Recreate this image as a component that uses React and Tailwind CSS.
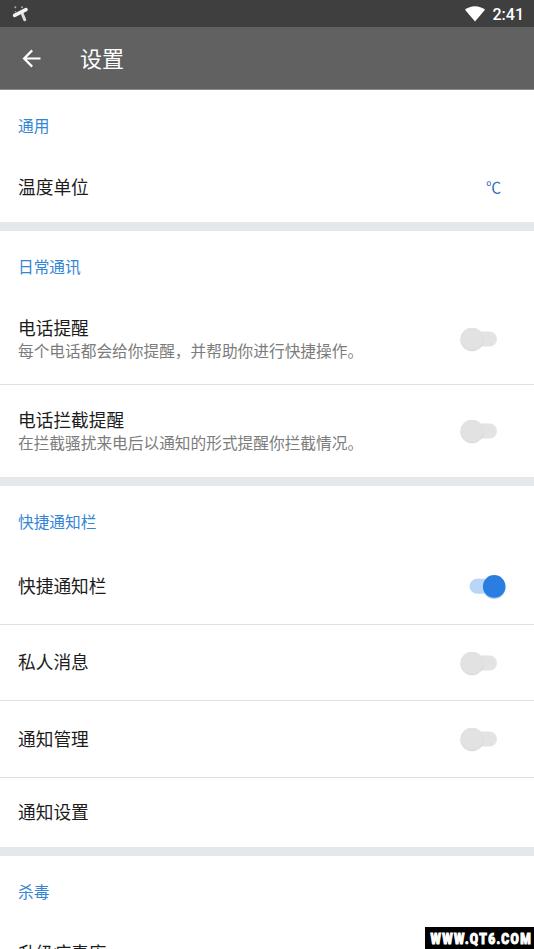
import React from "react";

function Switch({ on }) {
  return (
    <svg width="50" height="32" viewBox="0 0 50 32" className="shrink-0" role="switch" aria-checked={on}>
      {on ? (
        <>
          <rect x="13.5" y="7.8" width="28" height="15" rx="7.5" fill="#b9d6f6" />
          <circle cx="38.2" cy="16.8" r="11.3" fill="#bccfe6" />
          <circle cx="38.2" cy="15.4" r="11.3" fill="#2a7de1" />
        </>
      ) : (
        <>
          <rect x="13" y="8.5" width="28" height="15" rx="7.5" fill="#e3e3e3" />
          <circle cx="16" cy="16.6" r="11.6" fill="#d4d4d4" />
          <circle cx="16" cy="16" r="11.3" fill="#e2e2e2" />
        </>
      )}
    </svg>
  );
}

function Row({ title, sub, height, control }) {
  return (
    <div className={`flex shrink-0 items-center justify-between pr-[28px] pl-[18px] ${height}`}>
      <div className={sub ? "" : "pb-[3px]"}>
        <div className="text-[17.7px] leading-[24px] text-[#1c1c1c]">{title}</div>
        {sub && <div className="text-[15.7px] leading-[24px] text-[#7c7c7c]">{sub}</div>}
      </div>
      {control}
    </div>
  );
}

function Heading({ children }) {
  return (
    <h2 className="h-[63px] shrink-0 pt-[24px] pl-[18px] text-[15.7px] leading-[24px] text-[#3585d5]">{children}</h2>
  );
}

const Line = () => <div className="h-px shrink-0 bg-[#e0e0e0]" />;
const Gap = () => <div className="h-[9px] shrink-0 bg-[#e5e8eb]" />;

export default function App() {
  return (
    <div className="relative flex h-[949px] w-[534px] flex-col overflow-hidden bg-white font-['Noto_Sans_CJK_SC',sans-serif]">
      <div className="flex h-[27px] shrink-0 items-center justify-between bg-[#3f3f3f] pr-[10px] pl-[12px]">
        <svg width="18" height="17" viewBox="0 0 18 17">
          <path d="m10 8 2.7 6.8" stroke="#ddd" strokeWidth="3" strokeLinecap="round" />
          <path d="M2.6 10.4 14 4.6" stroke="#f2f2f2" strokeWidth="3.6" strokeLinecap="round" />
          <circle cx="3.3" cy="2.2" r="1" fill="#aaa" />
          <circle cx="10" cy="2.2" r="1" fill="#aaa" />
          <circle cx="3.4" cy="6.8" r=".8" fill="#999" />
        </svg>
        <div className="flex items-center gap-[8px]">
          <svg width="20" height="16" viewBox="0 0 20 16">
            <path d="M0 3.8Q4.2.3 10 .3T20 3.8L10 15.6Z" fill="#fff" />
          </svg>
          <span className="pt-[2px] font-['Roboto'] text-[16px] leading-[20px] font-medium text-white">2:41</span>
        </div>
      </div>
      <header className="flex h-[63px] shrink-0 items-center border-b border-[#8a8a8a] bg-[#616161] pl-[22px]">
        <svg width="20" height="20" viewBox="0 0 20 20" fill="none" stroke="#fff" strokeWidth="2.2">
          <path d="M18.5 10.5H2.5M10.2 2.4 2.1 10.5l8.1 8.1" />
        </svg>
        <h1 className="ml-[38px] pb-[2px] text-[22px] leading-[30px] text-white">设置</h1>
      </header>

      <Heading>通用</Heading>
      <Row
        title="温度单位"
        height="h-[69px]"
        control={<span className="pr-[5px] pb-[2px] text-[15px] leading-[24px] text-[#2f72c4]">℃</span>}
      />
      <Gap />

      <Heading>日常通讯</Heading>
      <Row title="电话提醒" sub="每个电话都会给你提醒，并帮助你进行快捷操作。" height="h-[90px]" control={<Switch />} />
      <Line />
      <Row title="电话拦截提醒" sub="在拦截骚扰来电后以通知的形式提醒你拦截情况。" height="h-[92px]" control={<Switch />} />
      <Gap />

      <Heading>快捷通知栏</Heading>
      <Row title="快捷通知栏" height="h-[75px]" control={<Switch on />} />
      <Line />
      <Row title="私人消息" height="h-[75px]" control={<Switch />} />
      <Line />
      <Row title="通知管理" height="h-[76px]" control={<Switch />} />
      <Line />
      <Row title="通知设置" height="h-[69px]" />
      <Gap />

      <Heading>杀毒</Heading>
      <Row title="升级病毒库" height="h-[69px]" />

      <div className="absolute right-0 bottom-0 h-[22px] w-[109px] bg-black">
        <svg width="109" height="22" viewBox="0 0 109 22" className="font-['Roboto'] font-black" fill="#fff" stroke="#fff" strokeWidth="1" fontSize="14.5">
          <text x="5.5" y="17" letterSpacing="1.6" textLength="101.5" lengthAdjust="spacingAndGlyphs">WWW.QT6.COM</text>
        </svg>
      </div>
    </div>
  );
}
